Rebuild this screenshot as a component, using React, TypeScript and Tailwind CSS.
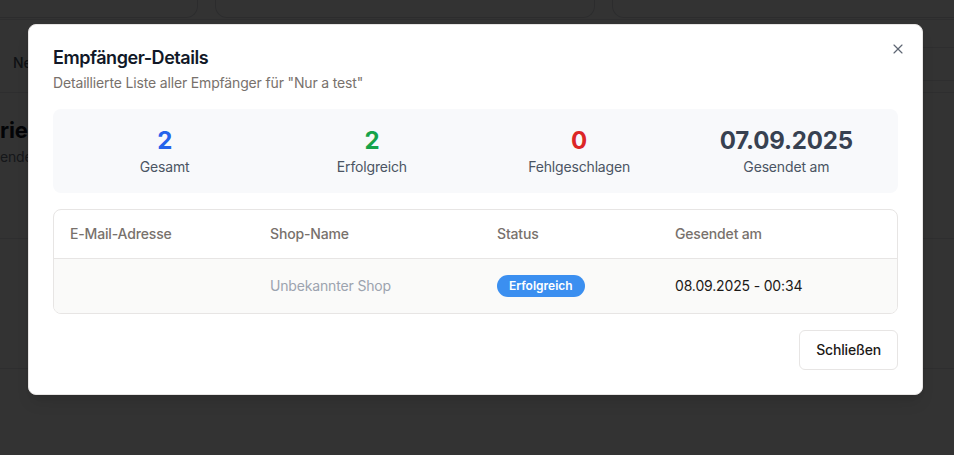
import React from 'react';
import { X } from 'lucide-react';

const stats = [
    { value: '2', label: 'Gesamt', color: 'text-[#2563eb]' },
    { value: '2', label: 'Erfolgreich', color: 'text-[#16a34a]' },
    { value: '0', label: 'Fehlgeschlagen', color: 'text-[#dc2626]' },
    { value: '07.09.2025', label: 'Gesendet am', color: 'text-[#374151]' },
];

const App: React.FC = () => {
    return (
        <div className="relative w-full h-[455px] overflow-hidden bg-white font-['Inter',sans-serif] tracking-[-0.01em]">
            {/* Page behind the dialog */}
            <div className="flex flex-col">
                <div className="h-[20px] border-b border-[#e5e7eb] flex gap-[17px] -ml-[182px]">
                    <div className="w-[380px] h-[18px] shrink-0 rounded-b-xl border border-t-0 border-[#d9dbe0]" />
                    <div className="w-[380px] h-[18px] shrink-0 rounded-b-xl border border-t-0 border-[#d9dbe0]" />
                    <div className="w-[380px] h-[18px] shrink-0 rounded-b-xl border border-t-0 border-[#d9dbe0]" />
                </div>
                <div className="h-[73px] border-b border-[#e5e7eb] flex justify-between">
                    <span className="ml-[13px] mt-[33px] h-5 text-sm font-medium text-[#4b5563]">Ne</span>
                    <div className="w-[80px] h-[34px] -mr-[30px] mt-[27px] border border-[#e5e7eb] rounded-md" />
                </div>
                <div className="pt-[21px]">
                    <h2 className="text-[22px] leading-8 font-bold text-[#111827]">rie</h2>
                    <p className="mt-[1px] text-sm text-[#6b7280]">ende</p>
                </div>
                <div className="mt-[71px] h-[131px] border-y border-[#e5e7eb]" />
            </div>

            {/* Overlay */}
            <div className="absolute inset-0 bg-black/80" />

            {/* Dialog */}
            <div className="absolute top-[24px] left-[28px] w-[895px] bg-white rounded-lg border border-[#e7e5e4] shadow-lg p-6 flex flex-col gap-4">
                <button className="absolute right-4 top-4 text-[#374151] opacity-80">
                    <X className="w-4 h-4" strokeWidth={1.75} />
                </button>

                <div className="flex flex-col gap-1.5">
                    <h2 className="text-lg font-semibold leading-none tracking-tight text-[#111827]">Empfänger-Details</h2>
                    <p className="text-sm text-[#78716c]">Detaillierte Liste aller Empfänger für "Nur a test"</p>
                </div>

                <div className="grid grid-cols-4 gap-4 p-4 bg-[#f8f9fb] rounded-lg">
                    {stats.map((s) => (
                        <div key={s.label} className="text-center">
                            <div className={`text-2xl font-bold ${s.color}`}>{s.value}</div>
                            <div className="text-sm text-[#4b5563]">{s.label}</div>
                        </div>
                    ))}
                </div>

                <div className="border border-[#e7e5e4] rounded-lg overflow-hidden">
                    <table className="w-full table-fixed text-sm">
                        <thead>
                            <tr className="border-b border-[#e7e5e4]">
                                <th className="w-[200px] h-12 px-4 text-left font-medium text-[#78716c]">E-Mail-Adresse</th>
                                <th className="w-[227px] h-12 px-4 text-left font-medium text-[#78716c]">Shop-Name</th>
                                <th className="w-[178px] h-12 px-4 text-left font-medium text-[#78716c]">Status</th>
                                <th className="h-12 px-4 text-left font-medium text-[#78716c]">Gesendet am</th>
                            </tr>
                        </thead>
                        <tbody>
                            <tr className="bg-[#fafaf9]">
                                <td className="p-4"></td>
                                <td className="p-4 text-[#9ca3af]">Unbekannter Shop</td>
                                <td className="p-4">
                                    <span className="inline-flex items-center rounded-full border border-transparent bg-[#3b8ff0] px-[11px] py-0.5 text-xs font-semibold tracking-normal text-white">
                                        Erfolgreich
                                    </span>
                                </td>
                                <td className="p-4 text-[#1c1917]">08.09.2025 - 00:34</td>
                            </tr>
                        </tbody>
                    </table>
                </div>

                <div className="flex justify-end">
                    <button className="h-10 px-4 rounded-md border border-[#e7e5e4] bg-white text-sm font-medium text-[#1c1917]">
                        Schließen
                    </button>
                </div>
            </div>
        </div>
    );
};

export default App;
